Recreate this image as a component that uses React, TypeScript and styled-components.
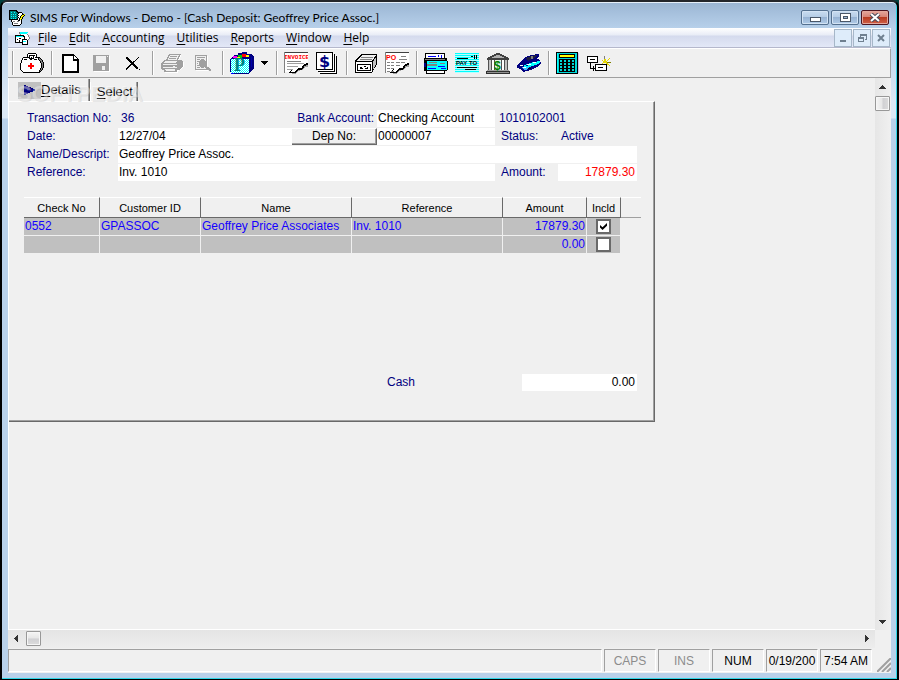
import React from 'react';
import styled, { createGlobalStyle, css } from 'styled-components';

const GlobalStyle = createGlobalStyle`
  * { box-sizing: border-box; }
  html, body { margin: 0; padding: 0; }
  body {
    background: #00403f;
    font-family: "Liberation Sans", Arial, sans-serif;
    font-size: 12px;
    color: #000;
  }
  button, input { font: inherit; color: inherit; margin: 0; padding: 0; border: 0; border-radius: 0; }
  svg { display: block; flex: none; }
`;

const navy = '#000080';
const face = '#f0f0f0';
const shadow = '#a0a0a0';
const dark = '#696969';

/* ---------- window frame ---------- */

const Frame = styled.div`
  display: flex;
  flex-direction: column;
  min-height: 100vh;
  padding: 0 6px 6px;
  border: 2px solid #000;
  border-top-color: #23262b;
  border-bottom-width: 1px;
  border-radius: 7px 7px 0 0;
  background: linear-gradient(#9ab5d3 0, #b7d0ea 26px, #dbe8f5 100px, #dbe8f5 116px, #b9d1ea 117px);
  box-shadow: inset -1px -1px 0 #2fd5e6, inset 0 1px 0 #e6f0fa;
`;

const TitleBar = styled.header`
  display: flex;
  align-items: center;
  height: 26px;
  padding: 5px 2px 0 1px;
  gap: 5px;
  font-family: Lato, "Open Sans", sans-serif;
`;

const Title = styled.h1`
  flex: 1;
  margin: 0;
  font-size: 12px;
  font-weight: 400;
  line-height: 18px;
  white-space: nowrap;
`;

const CaptionButtons = styled.div`
  display: flex;
  gap: 2px;
`;

const CaptionButton = styled.button<{ $close?: boolean }>`
  display: flex;
  align-items: center;
  justify-content: center;
  width: 28px;
  height: 15px;
  border: 1px solid ${p => (p.$close ? '#4c1420' : '#54708f')};
  border-radius: 2px;
  background: ${p =>
    p.$close
      ? 'linear-gradient(#e5a79c 0, #d88476 45%, #b93c22 50%, #cf6048 100%)'
      : 'linear-gradient(#c9dcf0 0, #b6cde6 45%, #97b3d3 50%, #b2cce8 100%)'};
  box-shadow: inset 0 0 0 1px ${p => (p.$close ? '#e3a79c' : '#d3e3f4')};
`;

const Client = styled.div`
  flex: 1;
  display: flex;
  flex-direction: column;
  min-width: 0;
  background: ${face};
`;

/* ---------- menu ---------- */

const MenuBar = styled.nav`
  display: flex;
  align-items: center;
  height: 20px;
  padding: 1px 1px 0 7px;
  border-bottom: 1px solid #b5b8cc;
  background: linear-gradient(#fff 0, #e8ecf6 7px, #d4daed 8px, #e3e8f7 19px);
  font-family: "Open Sans", "Noto Sans", sans-serif;
`;

const MenuItems = styled.div`
  display: flex;
  flex: 1;
  gap: 12px;
  padding-left: 8px;
`;

const MenuItem = styled.button`
  background: none;
  font-size: 12px;
  line-height: 18px;
  white-space: nowrap;
  u { text-underline-offset: 2px; }
`;

const ChildButton = styled.button`
  display: flex;
  align-items: center;
  justify-content: center;
  width: 18px;
  height: 18px;
  margin-left: 1px;
  border: 1px solid #a6b7c8;
  background: #deecfa;
`;

/* ---------- toolbar ---------- */

const ToolBar = styled.div`
  display: flex;
  height: 30px;
  padding: 2px 4px;
  border-top: 1px solid #fff;
  border-bottom: 1px solid ${shadow};
  border-right: 1px solid ${shadow};
`;

const ToolGroup = styled.div`
  display: flex;
  align-items: center;
  height: 24px;
  padding: 0 4px 0 3px;
  border-left: 1px solid ${shadow};
  box-shadow: inset 1px 0 0 #fff;
`;

const ToolButton = styled.button<{ $narrow?: boolean }>`
  display: flex;
  align-items: center;
  justify-content: center;
  width: ${p => (p.$narrow ? '15px' : '31px')};
  height: 24px;
  background: none;
`;

/* ---------- work area ---------- */

const WorkArea = styled.div`
  flex: 1;
  display: grid;
  grid-template-columns: minmax(0, 1fr) 16px;
  grid-template-rows: minmax(0, 1fr) 18px;
`;

const Document = styled.main`
  position: relative;
  border-left: 1px solid #fff;
  border-bottom: 1px solid #fff;
`;

const TabRow = styled.div`
  display: flex;
  align-items: flex-end;
  height: 23px;
`;

const Tab = styled.button<{ $active?: boolean }>`
  display: flex;
  align-items: center;
  height: ${p => (p.$active ? '22px' : '19px')};
  padding: ${p => (p.$active ? '0 8px 0 9px' : '0 4px 0 6px')};
  background: none;
  border-right: 1px solid ${dark};
  box-shadow: inset -1px 0 0 ${shadow};
  font-size: 13px;
  line-height: 16px;
  ${p => !p.$active && css`border-left: 1px solid #fff;`}
  u { text-underline-offset: 2px; }
`;

const TabMark = styled.span`
  display: flex;
  align-items: center;
  justify-content: center;
  width: 23px;
  height: 17px;
  background: #c0c0c0;
`;

const Watermark = styled.span`
  position: absolute;
  left: 8px;
  top: 3px;
  font-size: 22px;
  line-height: 26px;
  font-weight: 700;
  color: rgba(255, 255, 255, 0.35);
  text-shadow: 1px 1px 0 rgba(160, 160, 160, 0.25);
  pointer-events: none;
`;

const Panel = styled.section`
  display: flex;
  flex-direction: column;
  width: max-content;
  min-height: 321px;
  padding: 8px 13px 30px 15px;
  border-top: 1px solid #fff;
  border-right: 1px solid ${dark};
  border-bottom: 1px solid ${dark};
  box-shadow: inset -1px -1px 0 ${shadow};
`;

const Form = styled.div`
  display: grid;
  grid-template-columns: 94px 174px 85px 118px 63px 79px;
  grid-auto-rows: 17px;
  row-gap: 1px;
  padding-right: 4px;
  font-size: 12px;
  line-height: 17px;
  color: ${navy};
`;

const Label = styled.label<{ $indent?: number; $end?: boolean }>`
  padding-left: ${p => p.$indent ?? 3}px;
  ${p => p.$end && css`padding-right: 3px; text-align: right;`}
  white-space: nowrap;
`;

const Value = styled.output<{ $indent: number; $span?: number }>`
  padding-left: ${p => p.$indent}px;
  grid-column: span ${p => p.$span ?? 1};
`;

const Field = styled.input<{ $span?: number; $tone?: string; $right?: boolean }>`
  grid-column: span ${p => p.$span ?? 1};
  min-width: 0;
  width: 100%;
  height: 17px;
  padding: 0 2px 0 1px;
  background: #fff;
  color: ${p => p.$tone ?? '#000'};
  text-align: ${p => (p.$right ? 'right' : 'left')};
`;

const DepButton = styled.button`
  height: 17px;
  background: ${face};
  border-top: 1px solid #fff;
  border-right: 1px solid ${dark};
  border-bottom: 1px solid ${dark};
  box-shadow: inset -1px -1px 0 ${shadow};
  color: #000;
  font-size: 12px;
  line-height: 15px;
`;

const Grid = styled.table`
  width: 617px;
  margin-top: 16px;
  table-layout: fixed;
  border-collapse: separate;
  border-spacing: 0;
`;

const HeadCell = styled.th<{ $w: number }>`
  width: ${p => p.$w}px;
  height: 21px;
  padding: 0;
  border-top: 1px solid #fff;
  border-right: 1px solid ${dark};
  border-bottom: 1px solid ${dark};
  font-size: 11px;
  line-height: 16px;
  font-weight: 400;
  &:last-child {
    border-right: 0;
    border-bottom-color: ${shadow};
  }
`;

const Cell = styled.td<{ $right?: boolean }>`
  height: 18px;
  padding: 0 1px;
  border-right: 1px solid ${face};
  border-bottom: 1px solid ${face};
  background: #c0c0c0;
  color: #1500ff;
  font-size: 12px;
  line-height: 17px;
  text-align: ${p => (p.$right ? 'right' : 'left')};
  white-space: nowrap;
`;

const Tick = styled.input`
  appearance: none;
  display: block;
  width: 15px;
  height: 15px;
  margin: 1px auto;
  border: 2px solid ${dark};
  background: #fff;
  &:checked::before {
    content: '';
    display: block;
    width: 7px;
    height: 7px;
    margin: 2px;
    background: #000;
    clip-path: polygon(0 30%, 36% 62%, 100% 0, 100% 40%, 36% 100%, 0 66%);
  }
`;

const CashRow = styled.div`
  display: grid;
  grid-template-columns: 1fr 135px 115px;
  margin-top: auto;
  padding-right: 4px;
  line-height: 17px;
  color: ${navy};
  label { grid-column: 2; }
`;

/* ---------- scroll bars ---------- */

const ScrollBar = styled.div<{ $vertical?: boolean }>`
  display: flex;
  flex-direction: ${p => (p.$vertical ? 'column' : 'row')};
  align-items: center;
  padding: ${p => (p.$vertical ? '0 1px 0 0' : '0 0 2px')};
  background: ${p => (p.$vertical ? 'linear-gradient(90deg, #e6e6e6, #f0f0f0)' : 'linear-gradient(#e4e4e4, #ededed)')};
`;

const ScrollArrow = styled.button`
  display: flex;
  align-items: center;
  justify-content: center;
  width: 16px;
  height: 17px;
  background: none;
`;

const Thumb = styled.span<{ $vertical?: boolean }>`
  width: 15px;
  height: 15px;
  margin: ${p => (p.$vertical ? '1px 0 auto' : '0 auto 0 2px')};
  border: 1px solid #989898;
  border-radius: 1px;
  background: linear-gradient(${p => (p.$vertical ? '90deg' : '180deg')}, #f5f5f5 0, #e6e6e6 48%, #d0d0d3 52%, #dcdcdc 100%);
  box-shadow: inset 0 0 0 1px #f6f6f6;
`;

/* ---------- status bar ---------- */

const StatusBar = styled.footer`
  display: flex;
  gap: 2px;
  height: 25px;
  padding: 1px 0 1px;
`;

const Pane = styled.div<{ $grow?: boolean; $off?: boolean }>`
  flex: ${p => (p.$grow ? '1' : '0 0 52px')};
  overflow: hidden;
  border: 1px solid #fff;
  border-top-color: ${shadow};
  border-left-color: ${shadow};
  color: ${p => (p.$off ? '#8c8c8c' : '#000')};
  font-size: 12px;
  line-height: 22px;
  text-align: center;
  white-space: nowrap;
`;

const Grip = styled.div`
  display: flex;
  align-items: flex-end;
  justify-content: flex-end;
  width: 17px;
`;

/* ---------- icons ---------- */

type Rect = [number, number, number, number, string];

const Pic = ({ w, h, children }: { w: number; h: number; children: React.ReactNode }) => (
  <svg width={w} height={h} viewBox={`0 0 ${w} ${h}`} shapeRendering="crispEdges" aria-hidden="true">
    {children}
  </svg>
);

const Rects = ({ list }: { list: Rect[] }) => (
  <>
    {list.map(([x, y, w, h, fill], i) => (
      <rect key={i} x={x} y={y} width={w} height={h} fill={fill} />
    ))}
  </>
);

const palette: Record<string, string> = {
  k: '#000', w: '#fff', g: '#808080', s: '#c0c0c0', r: '#f00', t: '#008080',
  c: '#0ff', b: '#00f', n: '#000080', y: '#ff0', m: '#f0f', e: '#008000', d: '#404040', a: '#a0a0a0',
};

/* One character per pixel; a dot leaves the pixel clear. */
const Bitmap = ({ rows }: { rows: string[] }) => {
  const list: Rect[] = [];
  rows.forEach((row, y) => {
    let x = 0;
    while (x < row.length) {
      let end = x + 1;
      while (end < row.length && row[end] === row[x]) end += 1;
      if (palette[row[x]]) list.push([x, y, end - x, 1, palette[row[x]]]);
      x = end;
    }
  });
  return (
    <Pic w={Math.max(...rows.map(r => r.length))} h={rows.length}>
      <Rects list={list} />
    </Pic>
  );
};

const AppIcon = () => (
  <Bitmap rows={[
    'kkkkkkkk........',
    'kttttttkk.......',
    'ktcttcttkkkkk...',
    'kttttttttkwwwk..',
    'ktctctctkwwwwkky',
    'kttttttttkwwkyyk',
    'ktctctctkwwkyyk.',
    'kttttttttkwkyk..',
    'ktctctctkwkyyk..',
    'kkkkkkkkkwkyk...',
    '..kwwwwwwkkwk...',
    '..kwggwwggwwk...',
    '...kwwwwwwwwk...',
    '...kwggggwwwk...',
    '...kwwwwwwwk....',
    '....kkkkkkk.....',
  ]} />
);

const ChildIcon = () => (
  <Bitmap rows={[
    '....gcccccccc..',
    '....gccccccc...',
    '.....gwwwwwwg..',
    'kkkkkkkkkwwwwg.',
    'kccccccckkwwwg.',
    'kwwwwwwwwkwwwwg',
    'kwwwkkwwwkwwwwg',
    'kwkwwwwkkkkkwg.',
    'kwwwkwwkwwwwk..',
    'kwwwkwwkcccwk..',
    'kkkkkkkkwwwwk..',
    '.......kwwwwk..',
    '.......kkkkkk..',
  ]} />
);

const KitIcon = () => (
  <Bitmap rows={[
    '........kkkkkkkk........',
    '.......kwwwwwwwwk.......',
    '.......kwkkkkkkwk.......',
    '.......kwkwwwkwwk.......',
    '...kkkkkkkwkwkwkkkkk....',
    '..kwwwwwwkkkkkwwwwkgk...',
    '..kwkkkwwwkkwwkkkwkggk..',
    '.kwwwwwwwwwwwwwwwwwkggk.',
    '.kwwwwwwwwwwwwwwwwwwkgk.',
    '.kwwwwwwwwwwwwwwwwwwkggk',
    'kwwwwwwwwwrrwwwwwwwwwkgk',
    'kwwwwwwwwwrrwwwwwwwwwkgk',
    'kwwwwwwwrrrrrrwwwwwwwkgk',
    'kwwwwwwwrrrrrrwwwwwwwkgk',
    'kwwwwwwwwwrrwwwwwwwwwkgk',
    'kwwwwwwwwwrrwwwwwwwwkgk.',
    'kwwwwwwwwwwwwwwwwwwwkgk.',
    '.kwwwwwwwwwwwwwwwwwkgk..',
    '..kwwwwwwwwwwwwwwwwkk...',
    '...kkkkkkkkkkkkkkkkk....',
  ]} />
);

const NewIcon = () => (
  <Pic w={17} h={19}>
    <path d="M0 0h12v1h1v1h1v1h1v1h1v1h1v14H0z" fill="#000" />
    <path d="M2 2h9v5h4v10H2z" fill="#fff" />
    <path d="M12 2h1v1h1v1h1v1h-3z" fill="#fff" />
  </Pic>
);

const SaveIcon = () => (
  <Pic w={17} h={17}>
    <Rects list={[[0, 0, 16, 16, '#a0a0a0'], [16, 1, 1, 16, '#fff'], [1, 16, 16, 1, '#fff'], [3, 1, 10, 7, '#f0f0f0'], [14, 1, 1, 1, '#f0f0f0'], [4, 10, 9, 6, '#a0a0a0'], [9, 11, 3, 4, '#f0f0f0']]} />
  </Pic>
);

const DeleteIcon = () => (
  <Bitmap rows={[
    'kk..........k.',
    'kkk........k..',
    '.kkk......k...',
    '..kkk....k....',
    '...kkk.kk.....',
    '....kkkk......',
    '.....kkk......',
    '....kkkkk.....',
    '...kk..kkk....',
    '..kk....kkk...',
    '.kk......kkk..',
    'kk........kk..',
    'k............k',
  ]} />
);

const PrintIcon = () => (
  <Bitmap rows={[
    '.........aaaaaaaaaaaa...',
    '........aa.........aw...',
    '........a.aaaaaaa.aaw...',
    '.......aa.........aw....',
    '.......a.aaaaaaa.aaw....',
    '......aa.........aw.....',
    '....aaaaaaaaaaaaaaaaaa..',
    '...aa............aaaaaa.',
    '..aa............aaaaaaaw',
    '.aaaaaaaaaaaaaaaaaaaaaaw',
    '.aa..............aaaaaaw',
    '.aaaaaaaaaaaaaaaaaaaaaaw',
    '.aaaaaaaaaaaa..aaaaaaaaw',
    '.aa..............aaaaaw.',
    '.aaaaaaaaaaaaaaaaaaaaw..',
    '..aaa..........aaaaaw...',
    '....aa.........aaww.....',
    '....aaaaaaaaaaaaaw......',
    '.....wwwwwwwwwwwww......',
  ]} />
);

const PreviewIcon = () => (
  <Bitmap rows={[
    'aaaaaaaaaaaa....',
    'a..........aw...',
    'a.aaaaaaaa.aw...',
    'a..........aw...',
    'a.aaa.aaa..aw...',
    'a....aaaaa.aw...',
    'a.aaaaaaaaaaw...',
    'a...aaaaaaaaw...',
    'a.a.aaaaaaaaw...',
    'a...aaaaaaaaw...',
    'a.aaaaaaaaaaw...',
    'a....aaaaaaa....',
    'a.aaa.aaa.aaaa..',
    'a..........aaaa.',
    'aaaaaaaaaaaaaaaa',
    '.wwwwwwwwwwww.aa',
  ]} />
);

const BagIcon = () => (
  <Pic w={24} h={22}>
    <defs>
      <pattern id="weave" width="2" height="2" patternUnits="userSpaceOnUse">
        <rect width="2" height="2" fill="#fff" />
        <rect width="1" height="1" fill="#0ff" />
        <rect x="1" y="1" width="1" height="1" fill="#0ff" />
      </pattern>
    </defs>
    <path d="M0 7l4-4h4V1h4V0h5v2h4l3 2v12l-4 5-2 1H2l-2-2z" fill="#000080" />
    <rect x="1" y="7" width="18" height="14" fill="url(#weave)" />
    <Rects list={[[3, 4, 4, 2, '#f0f'], [8, 3, 4, 3, '#0c0'], [12, 2, 4, 3, '#f00'], [16, 3, 3, 2, '#ff0'], [7, 5, 3, 1, '#ff0'], [1, 21, 3, 1, '#00f'], [21, 5, 1, 10, '#00a']]} />
    <text x="4" y="19" fontFamily="Liberation Serif" fontWeight="700" fontSize="18" fill="#008080">P</text>
  </Pic>
);

const DropIcon = () => <Bitmap rows={['kkkkkkk', '.kkkkk.', '..kkk..', '...k...']} />;

const Torn = () => (
  <>
    <path d="M0 0h24v11l-4 2-2 3-4 1-3 3H0z" fill="#fff" />
    <path d="M24 14h-3l-3 3-4 1-3 3H8" fill="none" stroke="#a0a0a0" strokeWidth="2" />
    <path d="M24 11l-4 2-2 3-4 1-3 3H6l3-3" fill="none" stroke="#000" strokeWidth="1" />
    <path d="M24 12l-4 2-2 3-4 1-3 3" fill="none" stroke="#000" strokeWidth="1" />
  </>
);

const InvoiceIcon = () => (
  <Pic w={24} h={22}>
    <Torn />
    <text x="0" y="7" fontFamily="Liberation Mono" fontWeight="700" fontSize="6" fill="#f00">INVOICE</text>
    <Rects list={[[3, 9, 14, 1, '#808080'], [3, 11, 17, 1, '#a0a0a0'], [3, 14, 11, 1, '#a0a0a0'], [3, 17, 6, 1, '#a0a0a0'], [0, 0, 24, 1, '#404040'], [0, 0, 1, 21, '#808080']]} />
  </Pic>
);

const DollarIcon = () => (
  <Pic w={21} h={22}>
    <Rects list={[[4, 4, 17, 18, '#000'], [3, 3, 17, 18, '#fff'], [2, 2, 17, 18, '#000'], [1, 1, 17, 18, '#fff'], [0, 0, 17, 18, '#000'], [1, 1, 15, 16, '#fff'], [18, 2, 1, 18, '#000'], [2, 19, 17, 1, '#000'], [20, 4, 1, 18, '#000'], [4, 21, 17, 1, '#000']]} />
    <text x="3" y="15" fontFamily="DejaVu Sans" fontWeight="700" fontSize="16" fill="#000080">$</text>
  </Pic>
);

const BoxIcon = () => (
  <Pic w={22} h={19}>
    <path d="M0 7l6-7h16v10l-5 9H0z" fill="#000" />
    <path d="M2 7l5-6h14l-4 6z" fill="#f0f0f0" />
    <path d="M18 8l3-5v7l-3 6z" fill="#c0c0c0" />
    <Rects list={[[6, 3, 12, 1, '#808080'], [5, 5, 12, 1, '#808080'], [1, 8, 16, 10, '#fff'], [2, 10, 14, 1, '#000'], [2, 16, 14, 1, '#000'], [2, 10, 1, 7, '#000'], [15, 10, 1, 7, '#000'], [5, 13, 2, 1, '#000'], [9, 12, 2, 1, '#000'], [12, 13, 1, 1, '#000'], [5, 14, 3, 1, '#000'], [10, 14, 3, 1, '#000']]} />
  </Pic>
);

const OrderIcon = () => (
  <Pic w={24} h={22}>
    <Torn />
    <text x="1" y="8" fontFamily="Liberation Sans" fontWeight="700" fontSize="7" fill="#f00">PO</text>
    <Rects list={[[0, 0, 24, 1, '#404040'], [0, 0, 1, 21, '#808080'], [16, 4, 5, 1, '#808080'], [14, 7, 8, 1, '#808080'],
      ...[10, 13, 16, 19].flatMap(y => [[2, y, 3, 1, '#808080'], [6, y, 3, 1, '#808080']] as Rect[]),
      [11, 10, 4, 1, '#808080'], [16, 10, 4, 1, '#808080'], [11, 13, 4, 1, '#808080']]} />
  </Pic>
);

const CheckPrinterIcon = () => (
  <Pic w={24} h={21}>
    <Rects list={[[1, 0, 20, 6, '#000'], [2, 1, 18, 5, '#fff'], [4, 3, 8, 1, '#00f'], [14, 2, 1, 2, '#00f'], [17, 2, 1, 3, '#00f'], [0, 5, 23, 13, '#000'], [1, 6, 20, 1, '#808080'], [3, 8, 20, 9, '#0ff'], [5, 9, 8, 1, '#808080'], [3, 11, 10, 2, '#808080'], [16, 10, 5, 1, '#808080'], [14, 13, 7, 1, '#00f'], [4, 15, 8, 1, '#00f'], [17, 15, 5, 1, '#00f'], [23, 8, 1, 9, '#000'], [2, 17, 19, 4, '#000'], [3, 18, 17, 2, '#fff'], [0, 10, 2, 4, '#000080']]} />
  </Pic>
);

const PayIcon = () => (
  <Pic w={24} h={20}>
    <Rects list={[...Array.from({ length: 10 }, (_, i) => [0, i * 2, 24, 1, '#0ff'] as Rect), ...Array.from({ length: 10 }, (_, i) => [0, i * 2 + 1, 24, 1, '#b8ffff'] as Rect), [16, 3, 2, 1, '#000'], [19, 2, 1, 4, '#000'], [21, 2, 1, 4, '#000'], [2, 5, 11, 1, '#000'], [2, 14, 20, 1, '#000'], [10, 16, 11, 1, '#000']]} />
    <text x="1" y="12" fontFamily="Liberation Sans" fontWeight="700" fontSize="6" fill="#000">PAY TO</text>
  </Pic>
);

const BankIcon = () => (
  <Pic w={24} h={21}>
    <path d="M1 5L9 1h1V0h4v1h1l8 4v2H1z" fill="#404040" />
    <path d="M5 5l6-3h2l6 3z" fill="#b0b0b0" />
    <Rects list={[[2, 7, 20, 11, '#505050'], [3, 7, 2, 10, '#c0c0c0'], [6, 7, 2, 10, '#fff'], [9, 7, 6, 10, '#e8f4e8'], [16, 7, 2, 10, '#fff'], [19, 7, 2, 10, '#c0c0c0'], [1, 17, 22, 1, '#a0a0a0'], [0, 18, 24, 3, '#303030'], [1, 19, 22, 1, '#909090']]} />
    <text x="8" y="17" fontFamily="Liberation Sans" fontWeight="700" fontSize="12" fill="#008000">$</text>
  </Pic>
);

const CardReaderIcon = () => (
  <Pic w={24} h={18}>
    <path d="M5 7l3-4 6-2 8-1v2l-2 3 3 1 1 3-4 4-6 3-8 2-3-3-3-1v-3z" fill="#000080" />
    <path d="M8 4l6-2 6-1-2 3-7 3z" fill="#202040" />
    <path d="M7 11l6-2 9-2 1 1-2 2-8 3-5 1z" fill="#0ff" />
    <path d="M3 12l4 2 5-1v2l-5 1z" fill="#3ab8ff" />
    <Rects list={[[3, 11, 3, 1, '#fff'], [6, 13, 3, 1, '#fff'], [10, 10, 4, 1, '#fff'], [16, 8, 3, 1, '#fff'], [11, 14, 3, 1, '#000'], [14, 2, 2, 3, '#808080'], [9, 11, 2, 1, '#000080']]} />
  </Pic>
);

const CalcIcon = () => (
  <Pic w={23} h={22}>
    <Rects list={[[0, 0, 22, 22, '#000'], [2, 1, 19, 20, '#00d8d8'], [1, 1, 1, 20, '#0ff'], [22, 1, 1, 20, '#c8c0f0'], [3, 2, 16, 4, '#000'], [4, 3, 14, 2, '#ff0'],
      [3, 7, 16, 13, '#000'],
      ...[8, 11, 14, 17].flatMap(y => [4, 8, 12, 16].map(x => [x, y, 2, 2, '#00d8d8'] as Rect))]} />
  </Pic>
);

const CardsIcon = () => (
  <Pic w={24} h={17}>
    <Rects list={[[0, 1, 11, 7, '#000'], [1, 2, 9, 5, '#fff'], [3, 4, 5, 1, '#000'], [3, 8, 1, 5, '#000'], [3, 13, 5, 1, '#000'], [6, 11, 1, 5, '#000'], [8, 9, 12, 7, '#000'], [9, 10, 10, 5, '#fff'], [11, 12, 5, 1, '#000'], [17, 1, 1, 4, '#808080'], [20, 7, 4, 1, '#808000']]} />
    <path d="M14 3l3 4 1-5 1 4 4-3-3 4 3 4-5-3-4 1 2-2z" fill="#e8d800" />
  </Pic>
);

const Arrow = ({ dir }: { dir: 'up' | 'down' | 'left' | 'right' }) => {
  const d = { up: 'M0 4h7L4 0H3z', down: 'M0 0h7L4 4H3z', left: 'M4 0v7L0 4V3z', right: 'M0 0v7l4-3V3z' }[dir];
  const tall = dir === 'left' || dir === 'right';
  return <Pic w={tall ? 4 : 7} h={tall ? 7 : 4}><path d={d} fill="#333" /></Pic>;
};

/* ---------- content ---------- */

const menus = ['File', 'Edit', 'Accounting', 'Utilities', 'Reports', 'Window', 'Help'];

type Tool = { name: string; icon: React.ReactNode; narrow?: boolean; off?: boolean };

const toolGroups: Tool[][] = [
  [{ name: 'Checkup', icon: <KitIcon /> }],
  [{ name: 'New', icon: <NewIcon /> }, { name: 'Save', icon: <SaveIcon />, off: true }, { name: 'Delete', icon: <DeleteIcon /> }],
  [{ name: 'Print', icon: <PrintIcon />, off: true }, { name: 'Preview', icon: <PreviewIcon />, off: true }],
  [{ name: 'Programs', icon: <BagIcon /> }, { name: 'More programs', icon: <DropIcon />, narrow: true }],
  [{ name: 'Invoice', icon: <InvoiceIcon /> }, { name: 'Receipts', icon: <DollarIcon /> }],
  [{ name: 'Inventory', icon: <BoxIcon /> }, { name: 'Purchase order', icon: <OrderIcon /> }],
  [{ name: 'Print checks', icon: <CheckPrinterIcon /> }, { name: 'Pay to', icon: <PayIcon /> }, { name: 'Bank', icon: <BankIcon /> }, { name: 'Cards', icon: <CardReaderIcon /> }],
  [{ name: 'Calculator', icon: <CalcIcon /> }, { name: 'Links', icon: <CardsIcon /> }],
];

const columns = [
  { title: 'Check No', width: 76 },
  { title: 'Customer ID', width: 101 },
  { title: 'Name', width: 151 },
  { title: 'Reference', width: 151 },
  { title: 'Amount', width: 84 },
  { title: 'Incld', width: 34 },
  { title: '', width: 20 },
];

const deposits = [
  { check: '0552', customer: 'GPASSOC', name: 'Geoffrey Price Associates', reference: 'Inv. 1010', amount: '17879.30', included: true },
  { check: '', customer: '', name: '', reference: '', amount: '0.00', included: false },
];

export default function App() {
  return (
    <>
      <GlobalStyle />
      <Frame>
        <TitleBar>
          <AppIcon />
          <Title>SIMS For Windows - Demo - [Cash Deposit: Geoffrey Price Assoc.]</Title>
          <CaptionButtons>
            <CaptionButton aria-label="Minimize">
              <Pic w={11} h={9}><Rects list={[[0, 4, 11, 5, '#4a5768'], [1, 5, 9, 3, '#fff']]} /></Pic>
            </CaptionButton>
            <CaptionButton aria-label="Maximize">
              <Pic w={11} h={9}><Rects list={[[0, 0, 11, 9, '#4a5768'], [1, 1, 9, 7, '#fff'], [3, 3, 5, 3, '#4a5768'], [4, 4, 3, 1, '#9fb9d6']]} /></Pic>
            </CaptionButton>
            <CaptionButton aria-label="Close" $close>
              <svg width="12" height="9" viewBox="0 0 12 9" aria-hidden="true">
                <path d="M2 1l8 7M10 1L2 8" stroke="#4a4a5a" strokeWidth="4" />
                <path d="M2 1l8 7M10 1L2 8" stroke="#fff" strokeWidth="2" />
              </svg>
            </CaptionButton>
          </CaptionButtons>
        </TitleBar>

        <Client>
          <MenuBar>
            <ChildIcon />
            <MenuItems>
              {menus.map(name => (
                <MenuItem key={name}><u>{name[0]}</u>{name.slice(1)}</MenuItem>
              ))}
            </MenuItems>
            <ChildButton aria-label="Minimize document">
              <Pic w={6} h={8}><Rects list={[[0, 6, 6, 2, '#6f8090']]} /></Pic>
            </ChildButton>
            <ChildButton aria-label="Restore document">
              <Pic w={9} h={8}><Rects list={[[2, 0, 7, 2, '#6f8090'], [8, 2, 1, 3, '#6f8090'], [7, 5, 2, 1, '#6f8090'], [2, 2, 1, 1, '#6f8090'], [0, 3, 6, 2, '#6f8090'], [0, 5, 1, 3, '#6f8090'], [5, 5, 1, 3, '#6f8090'], [0, 7, 6, 1, '#6f8090']]} /></Pic>
            </ChildButton>
            <ChildButton aria-label="Close document">
              <svg width="8" height="8" viewBox="0 0 8 8" aria-hidden="true"><path d="M1 1l6 6M7 1L1 7" stroke="#6f8090" strokeWidth="2" /></svg>
            </ChildButton>
          </MenuBar>

          <ToolBar role="toolbar">
            {toolGroups.map((group, i) => (
              <ToolGroup key={i}>
                {group.map(tool => (
                  <ToolButton key={tool.name} aria-label={tool.name} $narrow={tool.narrow} disabled={tool.off}>{tool.icon}</ToolButton>
                ))}
              </ToolGroup>
            ))}
          </ToolBar>

          <WorkArea>
            <Document>
              <TabRow role="tablist">
                <Tab role="tab" aria-selected $active>
                  <TabMark><Pic w={11} h={10}><path d="M0 0h2v1h2v1h3v1h2v1h2v2H9v1H6v1H4v1H2v1H0z" fill="#000080" /></Pic></TabMark>
                  <span><u>D</u>etails</span>
                </Tab>
                <Tab role="tab"><span><u>S</u>elect</span></Tab>
              </TabRow>
              <Watermark aria-hidden="true">SOFTPEDIA</Watermark>

              <Panel>
                <Form>
                  <Label htmlFor="trans">Transaction No:</Label>
                  <Value id="trans" $indent={3}>36</Value>
                  <Label htmlFor="bank" $end $indent={0}>Bank Account:</Label>
                  <Field id="bank" defaultValue="Checking Account" />
                  <Value $indent={4} $span={2}>1010102001</Value>

                  <Label htmlFor="date">Date:</Label>
                  <Field id="date" defaultValue="12/27/04" />
                  <DepButton>Dep No:</DepButton>
                  <Field aria-label="Dep No" defaultValue="00000007" />
                  <Label htmlFor="status" $indent={6}>Status:</Label>
                  <Value id="status" $indent={3}>Active</Value>

                  <Label htmlFor="name">Name/Descript:</Label>
                  <Field id="name" $span={5} defaultValue="Geoffrey Price Assoc." />

                  <Label htmlFor="ref">Reference:</Label>
                  <Field id="ref" $span={3} defaultValue="Inv. 1010" />
                  <Label htmlFor="amount" $indent={6}>Amount:</Label>
                  <Field id="amount" $right $tone="#f00" defaultValue="17879.30" />
                </Form>

                <Grid>
                  <thead>
                    <tr>{columns.map(c => <HeadCell key={c.title} $w={c.width}>{c.title}</HeadCell>)}</tr>
                  </thead>
                  <tbody>
                    {deposits.map((d, i) => (
                      <tr key={i}>
                        <Cell>{d.check}</Cell>
                        <Cell>{d.customer}</Cell>
                        <Cell>{d.name}</Cell>
                        <Cell>{d.reference}</Cell>
                        <Cell $right>{d.amount}</Cell>
                        <Cell><Tick type="checkbox" aria-label={`Include row ${i + 1}`} defaultChecked={d.included} /></Cell>
                      </tr>
                    ))}
                  </tbody>
                </Grid>

                <CashRow>
                  <label htmlFor="cash">Cash</label>
                  <Field id="cash" $right defaultValue="0.00" />
                </CashRow>
              </Panel>
            </Document>

            <ScrollBar $vertical>
              <ScrollArrow aria-label="Scroll up"><Arrow dir="up" /></ScrollArrow>
              <Thumb $vertical />
              <ScrollArrow aria-label="Scroll down"><Arrow dir="down" /></ScrollArrow>
            </ScrollBar>
            <ScrollBar>
              <ScrollArrow aria-label="Scroll left"><Arrow dir="left" /></ScrollArrow>
              <Thumb />
              <ScrollArrow aria-label="Scroll right"><Arrow dir="right" /></ScrollArrow>
            </ScrollBar>
          </WorkArea>

          <StatusBar>
            <Pane $grow />
            <Pane $off>CAPS</Pane>
            <Pane $off>INS</Pane>
            <Pane>NUM</Pane>
            <Pane>0/19/200</Pane>
            <Pane>7:54 AM</Pane>
            <Grip>
              <svg width="14" height="14" viewBox="0 0 14 14" aria-hidden="true">
                <path d="M0 14L14 0M5 14l9-9M10 14l4-4" stroke="#a0a0a0" strokeWidth="2" />
              </svg>
            </Grip>
          </StatusBar>
        </Client>
      </Frame>
    </>
  );
}
